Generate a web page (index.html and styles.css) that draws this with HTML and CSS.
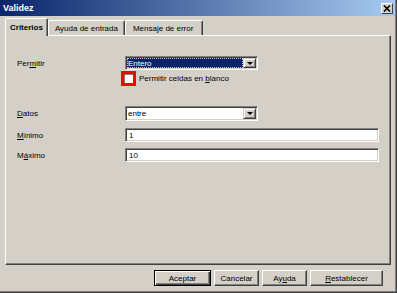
FILE: index.html
```html
<!DOCTYPE html>
<html lang="es">
<head>
    <meta charset="UTF-8">
    <meta name="viewport" content="width=device-width, initial-scale=1.0">
    <title>Validez</title>
    <link rel="stylesheet" href="styles.css">
</head>
<body>
    <div class="dialog">
        <div class="titlebar">
            <span class="title">Validez</span>
            <span class="close-btn">
                <svg width="8" height="7" viewBox="0 0 8 7">
                    <path d="M1 0.5 L7 6.5 M7 0.5 L1 6.5" stroke="#000" stroke-width="1.6"/>
                </svg>
            </span>
        </div>

        <div class="tabs">
            <div class="tab active">Criterios</div>
            <div class="tab">Ayuda de entrada</div>
            <div class="tab tab-wide">Mensaje de error</div>
        </div>

        <div class="panel">
            <div class="row row-allow">
                <span class="label">Per<u>m</u>itir</span>
                <div class="select focused">
                    <span class="value">Entero</span>
                    <span class="arrow"><i></i></span>
                </div>
            </div>

            <div class="row row-check">
                <span class="mark"><span class="checkbox"></span></span>
                <span class="check-label">Permitir celdas en <u>b</u>lanco</span>
            </div>

            <div class="row row-data">
                <span class="label"><u>D</u>atos</span>
                <div class="select">
                    <span class="value">entre</span>
                    <span class="arrow"><i></i></span>
                </div>
            </div>

            <div class="row row-min">
                <span class="label"><u>M</u>ínimo</span>
                <div class="field">1</div>
            </div>

            <div class="row row-max">
                <span class="label">M<u>á</u>ximo</span>
                <div class="field">10</div>
            </div>
        </div>

        <div class="buttons">
            <button class="btn btn-default">Aceptar</button>
            <button class="btn btn-cancel">Cancelar</button>
            <button class="btn btn-help">Ay<u>u</u>da</button>
            <button class="btn btn-reset"><u>R</u>establecer</button>
        </div>
    </div>
</body>
</html>
```

FILE: styles.css
```css
body {
    margin: 0;
    font-family: "Liberation Sans", Arial, sans-serif;
    font-size: 8px;
    color: #000;
    background-color: #d4d0c8;
}

u {
    text-decoration: underline;
}

.dialog {
    width: 397px;
    height: 293px;
    box-sizing: border-box;
    background-color: #d4d0c8;
    border-right: 1px solid #404040;
    border-bottom: 1px solid #404040;
    box-shadow: inset -1px -1px 0 #808080;
    overflow: hidden;
}

.titlebar {
    height: 16px;
    margin-right: 1px;
    display: flex;
    align-items: center;
    justify-content: space-between;
    background: linear-gradient(to right, #0a246a, #a6caf0);
}

.title {
    margin-left: 3px;
    color: #fff;
    font-weight: bold;
    font-size: 9px;
}

.close-btn {
    width: 12px;
    height: 11px;
    margin-right: 2px;
    box-sizing: border-box;
    display: flex;
    align-items: center;
    justify-content: center;
    background-color: #d4d0c8;
    border-top: 1px solid #fff;
    border-left: 1px solid #fff;
    border-right: 1px solid #404040;
    border-bottom: 1px solid #404040;
}

/* tabs */

.tabs {
    display: flex;
    align-items: flex-end;
    height: 17px;
    margin-top: 2px;
    padding-left: 5px;
}

.tab {
    height: 14px;
    padding: 0 6px;
    display: flex;
    align-items: center;
    border-top: 1px solid #fff;
    border-left: 1px solid #fff;
    border-right: 1px solid #404040;
    box-shadow: inset -1px 0 0 #808080;
    border-radius: 2px 2px 0 0;
}

.tab-wide {
    padding: 0 9px 0 7px;
}

.tab.active {
    position: relative;
    z-index: 1;
    height: 17px;
    margin-bottom: -1px;
    padding: 0 4px;
    font-weight: bold;
    background-color: #d4d0c8;
}

.panel {
    height: 230px;
    margin: 0 5px;
    box-sizing: border-box;
    padding-left: 11px;
    border-top: 1px solid #fff;
    border-left: 1px solid #fff;
    border-right: 1px solid #404040;
    border-bottom: 1px solid #404040;
    box-shadow: inset -1px -1px 0 #808080;
}

/* form rows */

.row {
    display: flex;
    align-items: center;
}

.label {
    width: 108px;
}

.row-allow {
    margin-top: 20px;
    height: 14px;
}

.row-check {
    margin-top: 1px;
    margin-left: 104px;
    height: 15px;
}

.row-data {
    margin-top: 20px;
    height: 15px;
}

.row-min {
    margin-top: 7px;
    height: 14px;
}

.row-max {
    margin-top: 6px;
    height: 14px;
}

.select,
.field {
    box-sizing: border-box;
    height: 100%;
    border-top: 1px solid #808080;
    border-left: 1px solid #808080;
    border-right: 1px solid #fff;
    border-bottom: 1px solid #fff;
    box-shadow: inset 1px 1px 0 #404040, inset -1px -1px 0 #d4d0c8;
    background-color: #fff;
}

.select {
    width: 133px;
    display: flex;
    padding: 1px;
}

.select .value {
    flex: 1;
    display: flex;
    align-items: center;
    padding-left: 1px;
}

.select.focused .value {
    background-color: #0a246a;
    color: #fff;
    outline: 1px dotted #c8c4b8;
    outline-offset: -1px;
}

.arrow {
    width: 13px;
    box-sizing: border-box;
    display: flex;
    align-items: center;
    justify-content: center;
    background-color: #d4d0c8;
    border-top: 1px solid #d4d0c8;
    border-left: 1px solid #d4d0c8;
    border-right: 1px solid #404040;
    border-bottom: 1px solid #404040;
    box-shadow: inset 1px 1px 0 #fff, inset -1px -1px 0 #808080;
}

.arrow i {
    width: 0;
    height: 0;
    border-left: 3px solid transparent;
    border-right: 3px solid transparent;
    border-top: 3px solid #000;
}

.field {
    width: 254px;
    padding-left: 3px;
    display: flex;
    align-items: center;
}

.mark {
    width: 15px;
    height: 15px;
    box-sizing: border-box;
    border: 3px solid #f00;
    background-color: #fff;
    display: flex;
}

.checkbox {
    flex: 1;
    border-top: 1px solid #808080;
    border-left: 1px solid #808080;
    background-color: #fff;
}

.check-label {
    margin-left: 3px;
}

/* buttons */

.buttons {
    display: flex;
    justify-content: flex-end;
    gap: 3px;
    margin-top: 5px;
    padding-right: 13px;
}

.btn {
    height: 16px;
    padding: 0;
    box-sizing: border-box;
    font-family: inherit;
    font-size: 8px;
    color: #000;
    background-color: #d4d0c8;
    border-top: 1px solid #fff;
    border-left: 1px solid #fff;
    border-right: 1px solid #404040;
    border-bottom: 1px solid #404040;
    box-shadow: inset -1px -1px 0 #808080;
}

.btn-default {
    width: 57px;
    border: 1px solid #000;
    box-shadow: inset 1px 1px 0 #fff, inset -1px -1px 0 #404040, inset -2px -2px 0 #808080;
}

.btn-cancel,
.btn-help {
    width: 45px;
}

.btn-reset {
    width: 73px;
}
```
